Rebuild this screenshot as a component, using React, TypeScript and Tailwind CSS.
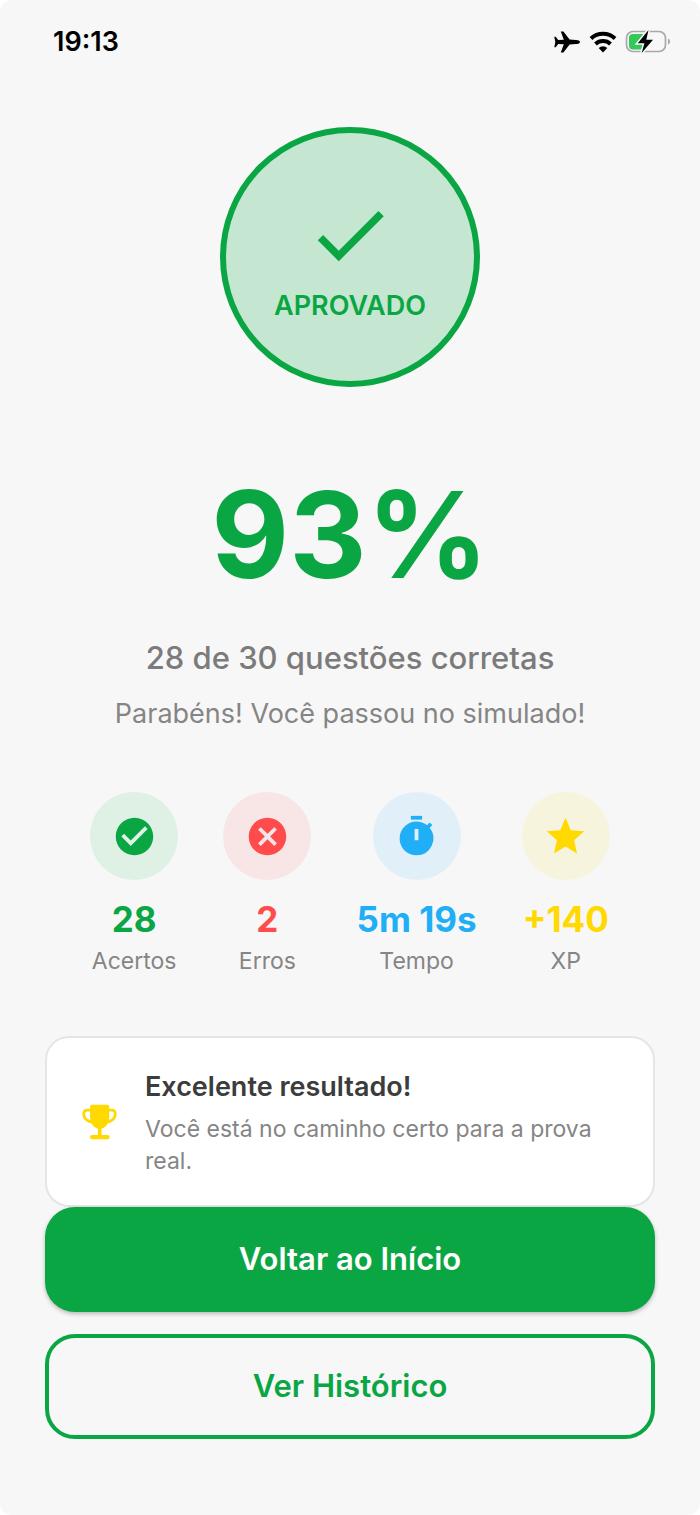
import type { ReactNode } from 'react';
import { MdCancel, MdCheck, MdCheckCircle, MdStar } from 'react-icons/md';

type Stat = {
  label: string;
  value: string;
  color: string;
  background: string;
  icon: ReactNode;
};

function TimerIcon() {
  return (
    <svg className="size-[45px]" viewBox="0 0 24 24" fill="currentColor" aria-hidden="true">
      <path d="M9 1h6v2H9z" />
      <path d="M19.03 7.39l1.42-1.42c-.43-.51-.9-.99-1.41-1.41l-1.42 1.42A8.96 8.96 0 0 0 12 4c-4.97 0-9 4.03-9 9s4.02 9 9 9a8.99 8.99 0 0 0 7.03-14.61zM13 14h-2V8h2v6z" />
    </svg>
  );
}

function TrophyIcon() {
  return (
    <svg className="w-[45px] shrink-0 text-[#ffd900]" viewBox="-16 -14 134 134" aria-hidden="true">
      <path
        d="M28 16H15C8 16 4 20 4 27c0 15 13 25 30 26M74 16h13c7 0 11 4 11 11 0 15-13 25-30 26"
        fill="none"
        stroke="currentColor"
        strokeWidth="8"
      />
      <path
        d="M28 0h46q6 0 6 6v30c0 18-9 32-23 35v19h19q5 0 5 5v3q0 5-5 5H28q-5 0-5-5v-3q0-5 5-5h18V71C32 68 23 54 23 36V6q0-6 5-6z"
        fill="currentColor"
      />
    </svg>
  );
}

function StatusIcons() {
  return (
    <div className="flex items-center gap-2 text-black">
      <svg className="h-6 w-7" viewBox="0 0 28 24" fill="currentColor" aria-label="Modo avião">
        <path d="M27 12c0-1.300-1.600-2-4-2.100l-6.400-.3-6.200-8.100H7.800l3 8.200-5.600.3-2.500-3.300H1.300L2.300 12l-1 5.300h1.400L5.200 14l5.600.3-3 8.200h2.600l6.200-8.100 6.400-.3c2.400-.1 4-.8 4-2.100z" />
      </svg>
      <svg className="h-6 w-7" viewBox="0 0 28 24" aria-label="Wi-Fi">
        <g fill="none" stroke="currentColor" strokeWidth="4">
          <path d="M2 8.500a17.500 17.500 0 0 1 24 0" />
          <path d="M6.500 14a11 11 0 0 1 15 0" />
        </g>
        <path d="M14 22.500l-4.300-4.600a6.400 6.400 0 0 1 8.600 0z" fill="currentColor" />
      </svg>
      <svg className="h-6 w-12" viewBox="0 0 48 24" aria-label="Bateria carregando">
        <rect x="1.500" y="1.500" width="39" height="20" rx="6.500" fill="none" stroke="#a8a8a8" strokeWidth="1.700" />
        <path d="M43 8.500c2.700.8 2.700 5.200 0 6z" fill="#a8a8a8" />
        <path d="M8 4h12v15.500H8q-4 0-4-4V8q0-4 4-4z" fill="#34c759" />
        <path
          d="M23.500 0L12.800 13.200h6.600L16.700 23 28 9.800h-6.700z"
          fill="#000"
          stroke="#f7f7f7"
          strokeWidth="3"
          paintOrder="stroke"
        />
      </svg>
    </div>
  );
}

const stats: Stat[] = [
  {
    label: 'Acertos',
    value: '28',
    color: 'text-[#0ba644]',
    background: 'bg-[#dff0e4]',
    icon: <MdCheckCircle className="size-[45px]" />,
  },
  {
    label: 'Erros',
    value: '2',
    color: 'text-[#ff4b4b]',
    background: 'bg-[#f8e6e6]',
    icon: <MdCancel className="size-[45px]" />,
  },
  {
    label: 'Tempo',
    value: '5m 19s',
    color: 'text-[#20aff7]',
    background: 'bg-[#e1f0f8]',
    icon: <TimerIcon />,
  },
  {
    label: 'XP',
    value: '+140',
    color: 'text-[#ffd900]',
    background: 'bg-[#f7f4de]',
    icon: <MdStar className="size-[45px]" />,
  },
];

export default function App() {
  return (
    <div className="min-h-screen bg-white font-['Inter',sans-serif]">
      <div className="flex min-h-screen flex-col rounded-xl bg-[#f7f7f7]">
        {/* Status bar */}
        <header className="flex h-[84px] items-center justify-between pr-[27px] pl-[53px]">
          <span className="text-[27px] font-semibold text-black">19:13</span>
          <StatusIcons />
        </header>

        <main className="flex flex-1 flex-col px-[45px] pt-[43px] pb-[76px]">
          {/* Result */}
          <section className="flex flex-col items-center text-center">
            <div className="flex size-[260px] flex-col items-center justify-center rounded-full border-6 border-[#0ba644] bg-[#c5e7d1] text-[#0ba644]">
              <MdCheck className="size-[90px]" />
              <span className="mt-2 text-[27px] leading-9 font-semibold">APROVADO</span>
            </div>
            <h1 className="mt-[76px] text-[120px] leading-[144px] font-bold text-[#0ba644]">93%</h1>
            <p className="mt-[31px] text-[31px] leading-10 font-medium text-[#7b7b7b]">28 de 30 questões corretas</p>
            <p className="mt-[18px] text-[27px] leading-9 text-[#858585]">Parabéns! Você passou no simulado!</p>
          </section>

          {/* Stats */}
          <section className="mt-[60px] flex justify-evenly">
            {stats.map((stat) => (
              <div key={stat.label} className={`flex flex-col items-center ${stat.color}`}>
                <div className={`flex size-[88px] items-center justify-center rounded-full ${stat.background}`}>
                  {stat.icon}
                </div>
                <span className="mt-[17px] text-[35px] leading-11 font-bold">{stat.value}</span>
                <span className="mt-1 text-[23px] leading-8 text-[#858585]">{stat.label}</span>
              </div>
            ))}
          </section>

          {/* Message card */}
          <section className="mt-[59px] flex items-center gap-[23px] rounded-3xl border-2 border-[#e5e5e5] bg-white px-[30px] pt-[29px] pb-7">
            <TrophyIcon />
            <div>
              <h2 className="text-[27px] leading-10 font-semibold text-[#3c3c3c]">Excelente resultado!</h2>
              <p className="mt-1.5 text-[23px] leading-8 text-[#858585]">
                Você está no caminho certo para a prova real.
              </p>
            </div>
          </section>

          {/* Actions */}
          <div className="flex flex-col gap-[22px]">
            <button
              type="button"
              className="h-[105px] rounded-[30px] bg-[#0ba644] text-[31px] font-semibold text-white shadow-[0_2px_4px_rgba(0,0,0,0.25)]"
            >
              Voltar ao Início
            </button>
            <button
              type="button"
              className="h-[105px] rounded-[30px] border-4 border-[#0ba644] text-[31px] font-semibold text-[#0ba644]"
            >
              Ver Histórico
            </button>
          </div>
        </main>
      </div>
    </div>
  );
}
